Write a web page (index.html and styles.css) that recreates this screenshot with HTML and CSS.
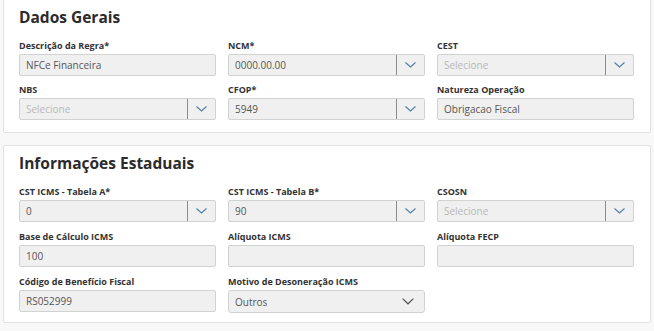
FILE: index.html
```html
<!DOCTYPE html>
<html lang="pt-BR">
<head>
    <meta charset="UTF-8">
    <meta name="viewport" content="width=device-width, initial-scale=1.0">
    <title>Regra Fiscal</title>
    <link rel="stylesheet" href="styles.css">
</head>
<body>
    <div class="page">
        <section class="card card-first">
            <h2 class="card-title">Dados Gerais</h2>
            <div class="form-grid">
                <div class="field">
                    <label class="field-label">Descrição da Regra*</label>
                    <div class="input">NFCe Financeira</div>
                </div>
                <div class="field">
                    <label class="field-label">NCM*</label>
                    <div class="input select">
                        <span class="select-value">0000.00.00</span>
                        <span class="select-btn"><svg width="11" height="6" viewBox="0 0 11 6"><path d="M0.5 0.5 L5.5 5 L10.5 0.5" fill="none" stroke="#4d7ea8" stroke-width="1.1"/></svg></span>
                    </div>
                </div>
                <div class="field">
                    <label class="field-label">CEST</label>
                    <div class="input select">
                        <span class="select-value placeholder">Selecione</span>
                        <span class="select-btn"><svg width="11" height="6" viewBox="0 0 11 6"><path d="M0.5 0.5 L5.5 5 L10.5 0.5" fill="none" stroke="#4d7ea8" stroke-width="1.1"/></svg></span>
                    </div>
                </div>
                <div class="field">
                    <label class="field-label">NBS</label>
                    <div class="input select">
                        <span class="select-value placeholder">Selecione</span>
                        <span class="select-btn"><svg width="11" height="6" viewBox="0 0 11 6"><path d="M0.5 0.5 L5.5 5 L10.5 0.5" fill="none" stroke="#4d7ea8" stroke-width="1.1"/></svg></span>
                    </div>
                </div>
                <div class="field">
                    <label class="field-label">CFOP*</label>
                    <div class="input select">
                        <span class="select-value">5949</span>
                        <span class="select-btn"><svg width="11" height="6" viewBox="0 0 11 6"><path d="M0.5 0.5 L5.5 5 L10.5 0.5" fill="none" stroke="#4d7ea8" stroke-width="1.1"/></svg></span>
                    </div>
                </div>
                <div class="field">
                    <label class="field-label">Natureza Operação</label>
                    <div class="input">Obrigacao Fiscal</div>
                </div>
            </div>
        </section>

        <section class="card card-second">
            <h2 class="card-title">Informações Estaduais</h2>
            <div class="form-grid">
                <div class="field">
                    <label class="field-label">CST ICMS - Tabela A*</label>
                    <div class="input select">
                        <span class="select-value">0</span>
                        <span class="select-btn"><svg width="11" height="6" viewBox="0 0 11 6"><path d="M0.5 0.5 L5.5 5 L10.5 0.5" fill="none" stroke="#4d7ea8" stroke-width="1.1"/></svg></span>
                    </div>
                </div>
                <div class="field">
                    <label class="field-label">CST ICMS - Tabela B*</label>
                    <div class="input select">
                        <span class="select-value">90</span>
                        <span class="select-btn"><svg width="11" height="6" viewBox="0 0 11 6"><path d="M0.5 0.5 L5.5 5 L10.5 0.5" fill="none" stroke="#4d7ea8" stroke-width="1.1"/></svg></span>
                    </div>
                </div>
                <div class="field">
                    <label class="field-label">CSOSN</label>
                    <div class="input select">
                        <span class="select-value placeholder">Selecione</span>
                        <span class="select-btn"><svg width="11" height="6" viewBox="0 0 11 6"><path d="M0.5 0.5 L5.5 5 L10.5 0.5" fill="none" stroke="#4d7ea8" stroke-width="1.1"/></svg></span>
                    </div>
                </div>
                <div class="field">
                    <label class="field-label">Base de Cálculo ICMS</label>
                    <div class="input">100</div>
                </div>
                <div class="field">
                    <label class="field-label">Alíquota ICMS</label>
                    <div class="input"></div>
                </div>
                <div class="field">
                    <label class="field-label">Alíquota FECP</label>
                    <div class="input"></div>
                </div>
                <div class="field">
                    <label class="field-label">Código de Benefício Fiscal</label>
                    <div class="input">RS052999</div>
                </div>
                <div class="field">
                    <label class="field-label">Motivo de Desoneração ICMS</label>
                    <div class="input native-select">
                        <span class="select-value">Outros</span>
                        <svg width="12" height="7" viewBox="0 0 12 7"><path d="M0.6 0.6 L6 5.8 L11.4 0.6" fill="none" stroke="#555555" stroke-width="1.2"/></svg>
                    </div>
                </div>
            </div>
        </section>
    </div>
</body>
</html>
```

FILE: styles.css
```css
* {
    margin: 0;
    padding: 0;
    box-sizing: border-box;
    font-family: 'Open Sans', 'Liberation Sans', sans-serif;
}

body {
    background-color: #f8f8f8;
    color: #333333;
}

.page {
    display: flex;
    flex-direction: column;
    gap: 12px;
    padding: 0 3px;
}

.card {
    background-color: #ffffff;
    border: 1px solid #e2e2e2;
    border-radius: 2px;
    padding: 7px 16px 12px 15px;
}

.card-first {
    margin-top: -1px;
}

.card-second {
    padding-bottom: 9px;
}

.card-second .form-grid {
    row-gap: 10px;
}

.card-title {
    font-size: 15.5px;
    line-height: 20px;
    font-weight: 700;
    color: #2b2b2b;
    margin-bottom: 14px;
}

.form-grid {
    display: grid;
    grid-template-columns: repeat(3, 1fr);
    column-gap: 12px;
    row-gap: 9px;
}

.field {
    display: flex;
    flex-direction: column;
}

.field-label {
    font-size: 9px;
    line-height: 10px;
    font-weight: 700;
    color: #333333;
    margin-bottom: 3px;
}

.input {
    height: 22px;
    background-color: #f0f0f0;
    border: 1px solid #d2d2d2;
    border-radius: 2px;
    padding: 0 6px;
    font-size: 10px;
    line-height: 20px;
    color: #555555;
}

.select {
    display: flex;
    padding: 0 0 0 6px;
}

.select-value {
    flex: 1;
}

.placeholder {
    color: #b8b8b8;
}

.select-btn {
    width: 28px;
    border-left: 1px solid #8c8c8c;
    display: flex;
    align-items: center;
    justify-content: center;
}

.native-select {
    display: flex;
    align-items: center;
    padding: 0 10px 0 6px;
    border-radius: 3px;
    height: 23px;
}
```
